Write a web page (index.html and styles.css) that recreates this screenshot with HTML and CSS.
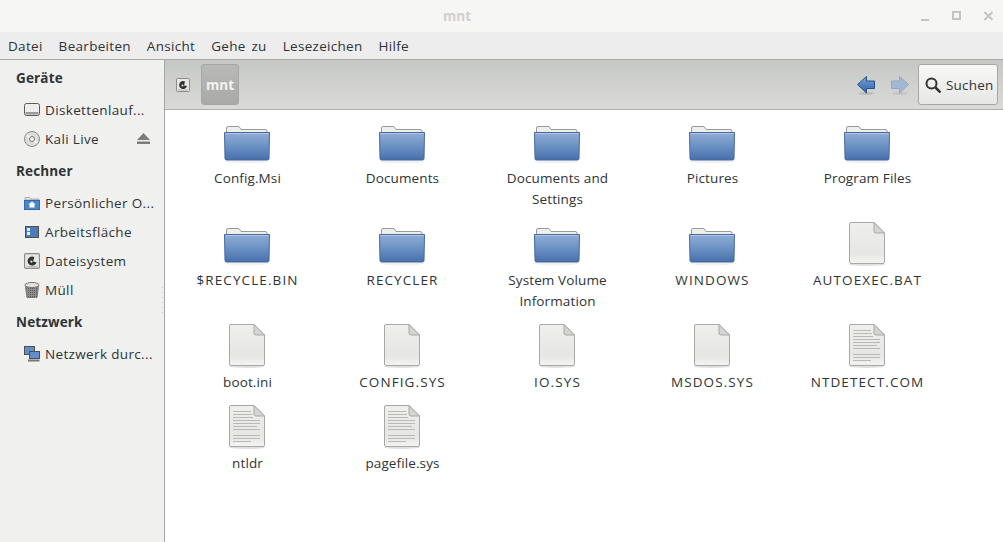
FILE: index.html
```html
<!DOCTYPE html>
<html lang="de">
<head>
  <meta charset="UTF-8">
  <meta name="viewport" content="width=device-width, initial-scale=1.0">
  <title>mnt</title>
  <link rel="stylesheet" href="styles.css">
</head>
<body>
  <svg class="defs" width="0" height="0">
    <defs>
      <linearGradient id="folder-body" x1="0" y1="0" x2="0" y2="1">
        <stop offset="0" stop-color="#90aed5"/>
        <stop offset=".6" stop-color="#648bc0"/>
        <stop offset="1" stop-color="#476fa9"/>
      </linearGradient>
      <linearGradient id="paper-fill" x1="0" y1="0" x2="0" y2="1">
        <stop offset="0" stop-color="#efefee"/>
        <stop offset=".75" stop-color="#e6e6e4"/>
        <stop offset="1" stop-color="#f4f4f3"/>
      </linearGradient>
      <linearGradient id="back-fill" x1="0" y1="0" x2="0" y2="1">
        <stop offset="0" stop-color="#7aa3d6"/>
        <stop offset="1" stop-color="#2f62a5"/>
      </linearGradient>
      <pattern id="mesh" width="2" height="2" patternUnits="userSpaceOnUse">
        <rect width="2" height="2" fill="#8e8e8c"/>
        <rect width="1" height="1" fill="#5c5c5a"/>
      </pattern>
      <symbol id="folder" viewBox="0 0 48 48">
        <ellipse cx="23" cy="42.500" rx="22" ry="2" fill="#000" opacity=".05"/>
        <path d="M2.500 14V9q0-1.500 1.500-1.500h11l2 3h24q2 0 2 1.500v2z" fill="#eeeeec" stroke="#9a9a98"/>
        <path d="M.5 13.500h45l-.5 26q0 1.500-1.500 1.500h-41Q1 41 1 39.500z" fill="url(#folder-body)" stroke="#46699f"/>
        <path d="M1.500 14.500h43" stroke="#b0c6e3"/>
      </symbol>
      <symbol id="doc" viewBox="0 0 48 48">
        <ellipse cx="23" cy="43.500" rx="18" ry="1.500" fill="#000" opacity=".12"/>
        <path d="M5.500 3q0-1.500 1.500-1.500h23L40.500 12v29q0 1.500-1.500 1.500H7q-1.500 0-1.500-1.500z" fill="url(#paper-fill)" stroke="#a8a8a6"/>
        <path d="M30 1.500 40.500 12H32q-2 0-2-2z" fill="#d4d4d2" stroke="#a8a8a6"/>
      </symbol>
      <symbol id="text-doc" viewBox="0 0 48 48">
        <use href="#doc"/>
        <path d="M9 7.500h18M9 10.500h19M9 13.500h20M9 16.500h27M9 19.500h27M9 22.500h24M9 25.500h27M9 31.500h27M9 34.500h27M9 37.500h18" stroke="#b9b9b7" stroke-width="1"/>
      </symbol>
      <symbol id="fs" viewBox="0 0 14 14">
        <rect x=".5" y=".5" width="13" height="13" rx="1" fill="#e6e6e4" stroke="#8c8c8a"/>
        <path d="M9 3.500A4 4 0 1 0 11 8L8 7.500z" fill="#333"/>
        <circle cx="6.500" cy="7.500" r="1" fill="#e6e6e4"/>
        <path d="M2 12h10" stroke="#b5b5b3"/>
      </symbol>
    </defs>
  </svg>

  <div class="window">
    <header class="titlebar">
      <div class="title">mnt</div>
      <div class="win-btns">
        <svg width="8" height="10" viewBox="0 0 8 10"><path d="M0 9h8" stroke="#c4c4c2" stroke-width="2"/></svg>
        <svg width="9" height="10" viewBox="0 0 9 10"><rect x="1" y="1" width="7" height="7" fill="none" stroke="#c4c4c2" stroke-width="2"/></svg>
        <svg width="9" height="10" viewBox="0 0 9 10"><path d="M.5 1l8 8M8.500 1l-8 8" stroke="#c4c4c2" stroke-width="2"/></svg>
      </div>
    </header>

    <nav class="menubar">
      <span>Datei</span>
      <span>Bearbeiten</span>
      <span>Ansicht</span>
      <span>Gehe zu</span>
      <span>Lesezeichen</span>
      <span>Hilfe</span>
    </nav>

    <div class="content">
      <aside class="sidebar">
        <div class="side-title">Geräte</div>
        <div class="side-item">
          <svg class="side-icon" viewBox="0 0 16 16"><rect x=".5" y="1.500" width="15" height="12" rx="2" fill="#ededeb" stroke="#5a5a58"/><rect x="1.500" y="10" width="13" height="2.500" fill="#9a9a98"/></svg>
          <span>Diskettenlauf...</span>
        </div>
        <div class="side-item">
          <svg class="side-icon" viewBox="0 0 16 16"><circle cx="8" cy="8" r="7.500" fill="#dcdcda" stroke="#8a8a88"/><path d="M3 4l3 3M13 12l-3-3" stroke="#f6f6f4" stroke-width="2"/><circle cx="8" cy="8" r="2.500" fill="#f4f4f2" stroke="#777"/></svg>
          <span>Kali Live</span>
          <svg class="eject" width="13" height="11" viewBox="0 0 13 11"><path d="M6.500 0 13 7H0z" fill="#7c7c7a"/><rect y="8.500" width="13" height="2.500" fill="#7c7c7a"/></svg>
        </div>
        <div class="side-title">Rechner</div>
        <div class="side-item">
          <svg class="side-icon" viewBox="0 0 16 16"><path d="M1 5V2.500h5l1 1.500h8v1z" fill="#e4e4e2" stroke="#8a8a88" stroke-width=".6"/><rect x=".5" y="5.500" width="15" height="9" fill="#4d86c6" stroke="#336aa8"/><path d="M8 6.500 11.500 9.500H10.500v3h-5v-3H4.500z" fill="#fff"/></svg>
          <span>Persönlicher O...</span>
        </div>
        <div class="side-item">
          <svg class="side-icon" viewBox="0 0 16 16"><rect x="1.500" y="2.500" width="13" height="11" fill="#4a7db8" stroke="#4f4f4d"/><rect x="3" y="4" width="3" height="3" fill="#e6eef7"/><rect x="3" y="8" width="3" height="3" fill="#e6eef7"/></svg>
          <span>Arbeitsfläche</span>
        </div>
        <div class="side-item">
          <svg class="side-icon" viewBox="0 0 14 14"><use href="#fs"/></svg>
          <span>Dateisystem</span>
        </div>
        <div class="side-item">
          <svg class="side-icon" viewBox="0 0 16 16"><path d="M1.500 4.500 3 15.500h10l1.500-11z" fill="url(#mesh)" stroke="#777"/><ellipse cx="8" cy="3" rx="7" ry="2.500" fill="#e2e2e0" stroke="#777"/></svg>
          <span>Müll</span>
        </div>
        <div class="side-title">Netzwerk</div>
        <div class="side-item">
          <svg class="side-icon" viewBox="0 0 16 16"><rect x=".5" y=".5" width="10" height="8" fill="#5f8ec8" stroke="#4f4f4d"/><rect x="5.500" y="5.500" width="10" height="7" fill="#5f8ec8" stroke="#4f4f4d"/><path d="M4 14.500h11.500" stroke="#777" stroke-width="2"/></svg>
          <span>Netzwerk durc...</span>
        </div>
        <div class="grip"></div>
      </aside>

      <main class="main">
        <div class="toolbar">
          <svg class="path-icon" width="14" height="14" viewBox="0 0 14 14"><use href="#fs"/></svg>
          <button class="path-btn">mnt</button>
          <svg class="nav-back" width="20" height="20" viewBox="0 0 20 20"><ellipse cx="10" cy="18.500" rx="8" ry="1.500" fill="#000" opacity=".12"/><path d="M1.500 9.500 10.500 1.500v4.500h8v7.500h-8v4.500z" fill="url(#back-fill)" stroke="#23508c"/></svg>
          <svg class="nav-fwd" width="20" height="20" viewBox="0 0 20 20"><ellipse cx="10" cy="18.500" rx="8" ry="1.500" fill="#000" opacity=".08"/><path d="M18.500 9.500 9.500 1.500v4.500h-8v7.500h8v4.500z" fill="#a3b8d3" stroke="#90a7c5"/></svg>
          <button class="search-btn">
            <svg width="16" height="16" viewBox="0 0 16 16"><circle cx="6.500" cy="6.500" r="5" fill="none" stroke="#333" stroke-width="2"/><path d="M10.500 10.500l5 5" stroke="#333" stroke-width="2.500"/></svg>
            <span>Suchen</span>
          </button>
        </div>

        <div class="files">
          <div class="file"><svg class="file-icon"><use href="#folder"/></svg><div class="file-name">Config.Msi</div></div>
          <div class="file"><svg class="file-icon"><use href="#folder"/></svg><div class="file-name">Documents</div></div>
          <div class="file"><svg class="file-icon"><use href="#folder"/></svg><div class="file-name">Documents and Settings</div></div>
          <div class="file"><svg class="file-icon"><use href="#folder"/></svg><div class="file-name">Pictures</div></div>
          <div class="file"><svg class="file-icon"><use href="#folder"/></svg><div class="file-name">Program Files</div></div>

          <div class="file"><svg class="file-icon"><use href="#folder"/></svg><div class="file-name caps">$RECYCLE.BIN</div></div>
          <div class="file"><svg class="file-icon"><use href="#folder"/></svg><div class="file-name caps">RECYCLER</div></div>
          <div class="file"><svg class="file-icon"><use href="#folder"/></svg><div class="file-name">System Volume Information</div></div>
          <div class="file"><svg class="file-icon"><use href="#folder"/></svg><div class="file-name caps">WINDOWS</div></div>
          <div class="file"><svg class="file-icon"><use href="#doc"/></svg><div class="file-name caps">AUTOEXEC.BAT</div></div>

          <div class="file"><svg class="file-icon"><use href="#doc"/></svg><div class="file-name">boot.ini</div></div>
          <div class="file"><svg class="file-icon"><use href="#doc"/></svg><div class="file-name caps">CONFIG.SYS</div></div>
          <div class="file"><svg class="file-icon"><use href="#doc"/></svg><div class="file-name caps">IO.SYS</div></div>
          <div class="file"><svg class="file-icon"><use href="#doc"/></svg><div class="file-name caps">MSDOS.SYS</div></div>
          <div class="file"><svg class="file-icon"><use href="#text-doc"/></svg><div class="file-name caps">NTDETECT.COM</div></div>

          <div class="file"><svg class="file-icon"><use href="#text-doc"/></svg><div class="file-name">ntldr</div></div>
          <div class="file"><svg class="file-icon"><use href="#text-doc"/></svg><div class="file-name">pagefile.sys</div></div>
        </div>
      </main>
    </div>
  </div>
</body>
</html>
```

FILE: styles.css
```css
html, body {
  height: 100%;
}

body {
  margin: 0;
  font-family: "Open Sans", sans-serif;
  font-size: 13.5px;
  color: #2e3436;
  overflow: hidden;
}

.defs {
  position: absolute;
}

.window {
  display: flex;
  flex-direction: column;
  height: 100%;
  background-color: white;
}

.titlebar {
  flex: 0 0 32px;
  display: flex;
  align-items: center;
  background-color: #f6f6f4;
}

.title {
  width: 914px;
  text-align: center;
  font-weight: bold;
  color: #d0d0ce;
}

.win-btns {
  display: flex;
  align-items: center;
  gap: 23px;
  margin-left: 7px;
}

.menubar {
  flex: 0 0 27px;
  display: flex;
  align-items: center;
  gap: 16px;
  padding-left: 8px;
  background-color: #ededed;
  border-bottom: 1px solid #a9a9a7;
  letter-spacing: .3px;
  word-spacing: 2px;
}

.content {
  flex: 1;
  display: flex;
  min-height: 0;
}

.sidebar {
  position: relative;
  flex: 0 0 164px;
  background-color: #f0f0ef;
  border-right: 1px solid #a6a6a4;
}

.side-title {
  height: 35px;
  line-height: 37px;
  padding-left: 16px;
  font-weight: bold;
  letter-spacing: .15px;
}

.side-item {
  display: flex;
  align-items: center;
  gap: 5px;
  height: 29px;
  padding-left: 24px;
  white-space: nowrap;
  letter-spacing: .35px;
}

.side-icon {
  width: 16px;
  height: 16px;
  flex: none;
}

.eject {
  margin-left: auto;
  margin-right: 14px;
}

.grip {
  position: absolute;
  right: 1px;
  top: 227px;
  width: 1px;
  height: 28px;
  background-image: linear-gradient(#c4c4c2 1px, transparent 1px);
  background-size: 1px 5px;
}

.main {
  flex: 1;
  min-width: 0;
  display: flex;
  flex-direction: column;
}

.toolbar {
  flex: 0 0 50px;
  box-sizing: border-box;
  display: flex;
  align-items: center;
  padding: 0 5px 0 11px;
  background: linear-gradient(#c6c8c5, #dadbd8);
  border-bottom: 1px solid #b0b0ae;
}

.path-icon {
  margin-right: 11px;
}

.path-btn {
  width: 38px;
  height: 41px;
  padding: 0;
  border: 1px solid #a6a6a4;
  border-radius: 3px;
  background: linear-gradient(#b9bab8, #a9aaa8);
  font-family: inherit;
  font-size: 13.5px;
  font-weight: bold;
  color: #f4f4f2;
}

.nav-back {
  margin-left: auto;
}

.nav-fwd {
  margin-left: 14px;
}

.search-btn {
  display: flex;
  align-items: center;
  gap: 5px;
  width: 80px;
  height: 41px;
  margin-left: 8px;
  padding: 0 0 0 6px;
  border: 1px solid #a6a6a4;
  border-radius: 3px;
  background: linear-gradient(#f8f8f7, #e6e6e4);
  font-family: inherit;
  font-size: 13.5px;
  color: #2e3436;
  letter-spacing: .2px;
}

.files {
  display: grid;
  grid-template-columns: repeat(5, 155px);
  align-content: start;
  padding: 9px 0 0 5px;
}

.file {
  display: flex;
  flex-direction: column;
  align-items: center;
  padding-bottom: 11px;
}

.file-icon {
  width: 48px;
  height: 48px;
  flex: none;
}

.file-name {
  width: 120px;
  margin-top: 1px;
  line-height: 21px;
  text-align: center;
  letter-spacing: .12px;
}

.caps {
  width: 150px;
  letter-spacing: 1.1px;
}
```
